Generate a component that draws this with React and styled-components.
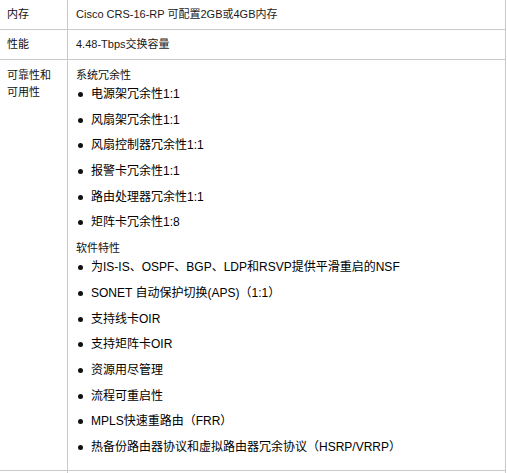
import React from "react";
import styled, { createGlobalStyle } from "styled-components";

const Global = createGlobalStyle`
  html, body { margin: 0; padding: 0; background: #fff; }
  body { font-family: "Liberation Sans", "Noto Sans CJK SC", sans-serif; color: #1a1a1a; }
`;

const Table = styled.div`
  width: 506px;
  border-right: 1px solid #c9c9c9;
  box-sizing: border-box;
`;

const Row = styled.div`
  display: grid;
  grid-template-columns: 68px 1fr;
  border-bottom: ${(p) => (p.$last ? "none" : "1px solid #c9c9c9")};
  min-height: ${(p) => (p.$filler ? "20px" : "0")};
`;

const Label = styled.div`
  box-sizing: border-box;
  border-right: 1px solid #c9c9c9;
  padding: ${(p) => (p.$tall ? "7px 7px 5px" : "6px 7px")};
  font-size: 11px;
  line-height: 17px;
  color: #111;
`;

const Value = styled.div`
  padding: ${(p) => (p.$tall ? "7px 8px 5px" : "6px 8px")};
  font-size: 11px;
  line-height: 17px;
  color: #1a1a1a;
`;

const SubHead = styled.div`
  font-size: 11px;
  line-height: 17px;
  color: #111;
`;

const List = styled.ul`
  list-style: none;
  margin: 2px 0 0;
  padding: 0;
`;

const Item = styled.li`
  display: flex;
  align-items: center;
  font-size: 12px;
  line-height: 17px;
  color: #000;
  margin-bottom: 8.7px;
  white-space: nowrap;
  &::before {
    content: "";
    width: 5px;
    height: 5px;
    border-radius: 50%;
    background: #111;
    margin: 0 8px 0 2px;
    flex: none;
  }
`;

const redundancy = [
  "电源架冗余性1:1",
  "风扇架冗余性1:1",
  "风扇控制器冗余性1:1",
  "报警卡冗余性1:1",
  "路由处理器冗余性1:1",
  "矩阵卡冗余性1:8",
];

const software = [
  "为IS-IS、OSPF、BGP、LDP和RSVP提供平滑重启的NSF",
  "SONET 自动保护切换(APS)（1:1）",
  "支持线卡OIR",
  "支持矩阵卡OIR",
  "资源用尽管理",
  "流程可重启性",
  "MPLS快速重路由（FRR）",
  "热备份路由器协议和虚拟路由器冗余协议（HSRP/VRRP）",
];

export default function App() {
  return (
    <>
      <Global />
      <Table>
        <Row>
          <Label>内存</Label>
          <Value>Cisco CRS-16-RP 可配置2GB或4GB内存</Value>
        </Row>
        <Row>
          <Label>性能</Label>
          <Value>4.48-Tbps交换容量</Value>
        </Row>
        <Row>
          <Label $tall>
            可靠性和
            <br />
            可用性
          </Label>
          <Value $tall>
            <SubHead>系统冗余性</SubHead>
            <List>
              {redundancy.map((t) => (
                <Item key={t}>{t}</Item>
              ))}
            </List>
            <SubHead>软件特性</SubHead>
            <List>
              {software.map((t) => (
                <Item key={t}>{t}</Item>
              ))}
            </List>
          </Value>
        </Row>
        <Row $filler $last>
          <Label />
          <Value />
        </Row>
      </Table>
    </>
  );
}
